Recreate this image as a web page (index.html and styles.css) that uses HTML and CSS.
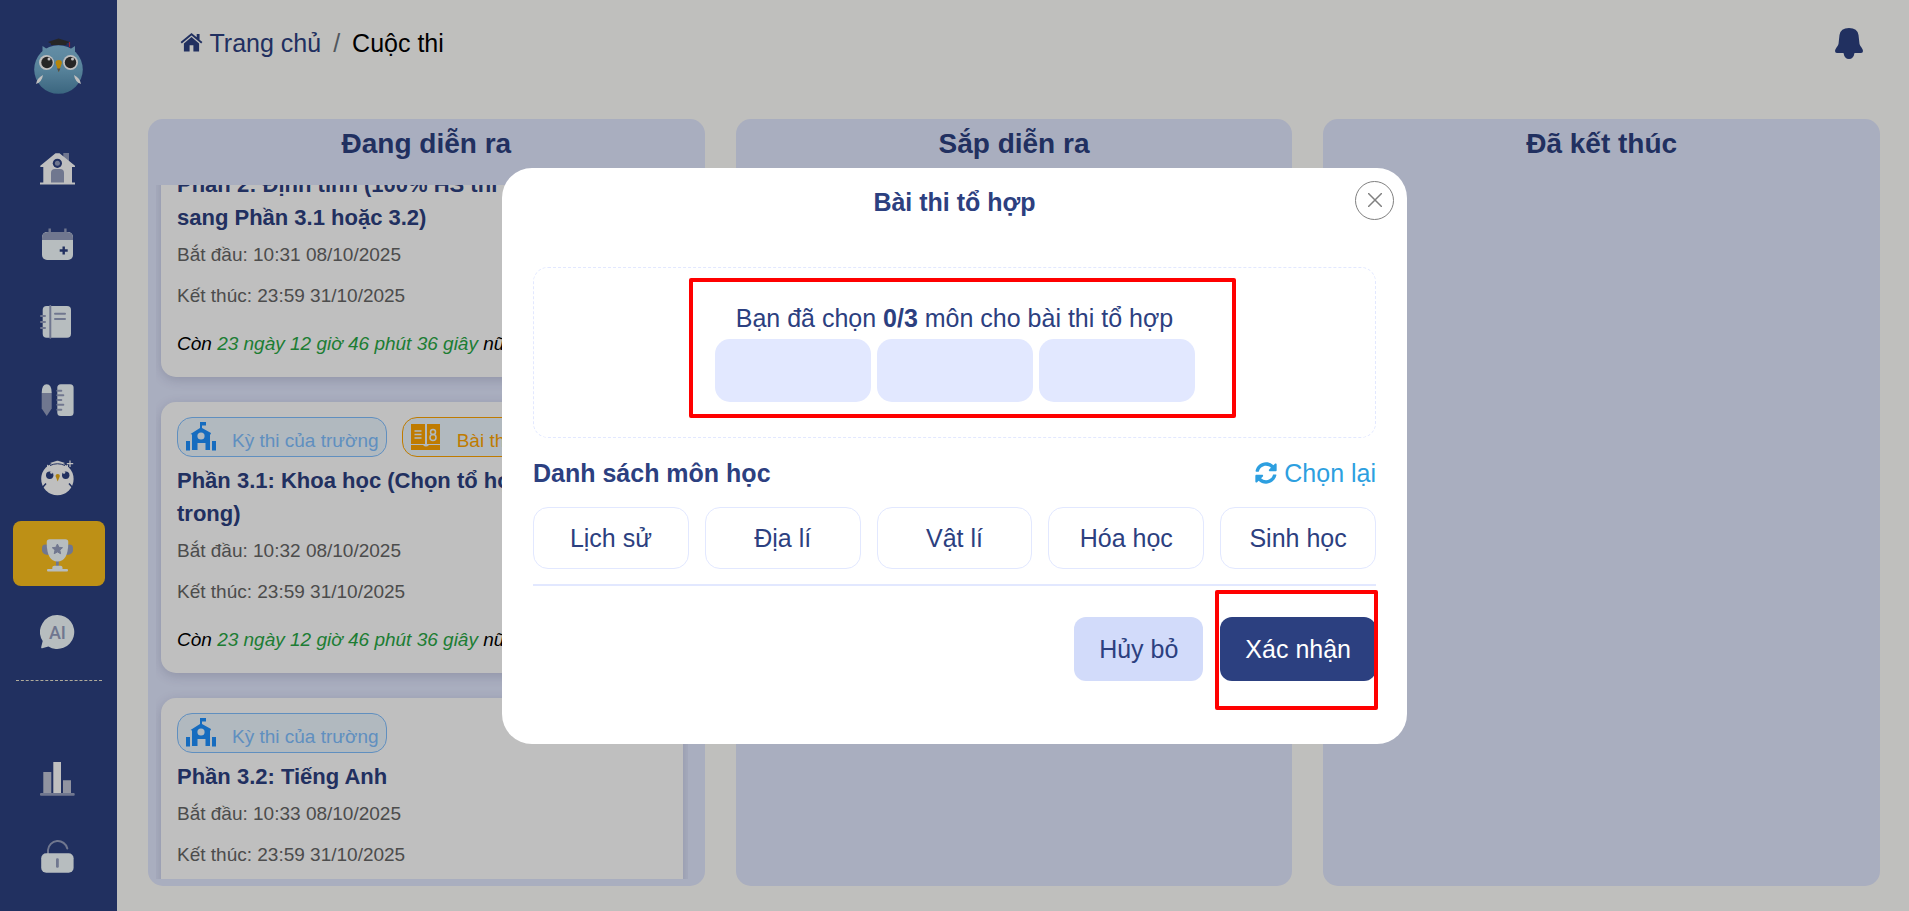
FILE: index.html
```html
<!DOCTYPE html>
<html lang="vi">
<head>
  <meta charset="UTF-8">
  <meta name="viewport" content="width=device-width, initial-scale=1.0">
  <title>Cuộc thi</title>
  <link rel="stylesheet" href="styles.css">
</head>
<body>
  <!-- shared icons -->
  <svg class="sprite" aria-hidden="true">
    <symbol id="icon-school" viewBox="0 0 30 30">
      <path fill="currentColor" d="M14 0h6v3.500h-4V6l9 5-.5 1.500H24V28h-4.500v-7h-8v7H6V12.500l-1.500-.5L14 6zM0 19h4v9.500H0zM26 19h4v9.500h-4z"/>
      <circle cx="15" cy="14" r="3.600" fill="#edf7ff"/>
    </symbol>
    <symbol id="icon-book" viewBox="0 0 30 28">
      <path fill="currentColor" d="M0 1h14v20H0zM16 1h13v20H16zM0 22h12q3 3 6 0h11v5H0z"/>
      <path stroke="#edf7ff" stroke-width="1.500" fill="none" d="M3.500 8h7M3.500 11.500h7M3.500 15h7"/>
      <circle cx="22" cy="9" r="2.500" stroke="#edf7ff" stroke-width="1.500" fill="none"/>
      <circle cx="22" cy="14.500" r="3" stroke="#edf7ff" stroke-width="1.500" fill="none"/>
    </symbol>
  </svg>

  <div class="layout">
    <aside class="sidebar">
      <a href="#" class="logo" aria-label="Logo">
        <svg width="50" height="56" viewBox="0 0 50 56">
          <defs>
            <linearGradient id="owlBody" x1="0" y1="0" x2="0" y2="1">
              <stop offset="0" stop-color="#86bede"/>
              <stop offset="0.500" stop-color="#74aece"/>
              <stop offset="1" stop-color="#4f88aa"/>
            </linearGradient>
          </defs>
          <path d="M8.500 8l6 4-6 6zM41 8l-6 4 6 6z" fill="#82b8d8"/>
          <circle cx="24.500" cy="31.500" r="24.300" fill="url(#owlBody)"/>
          <path d="M14 4l10.500-3.500L36 4l-3.500 1.500V7H17V5.500z" fill="#333"/>
          <path d="M35.500 4v5" stroke="#c0304a" stroke-width="1.200"/>
          <circle cx="12.500" cy="24.500" r="7.500" fill="#fff"/>
          <circle cx="36.500" cy="24.500" r="7.500" fill="#fff"/>
          <circle cx="13" cy="24.500" r="5.700" fill="#333"/>
          <circle cx="36.500" cy="24.500" r="5.700" fill="#333"/>
          <circle cx="15" cy="21" r="1.500" fill="#fff"/>
          <circle cx="38.500" cy="21" r="1.500" fill="#fff"/>
          <path d="M24.700 34l-3.200-9q0-3 3.200-3t3.200 3z" fill="#f2b00c"/>
          <path d="M23 30.500h3.400L24.700 34z" fill="#666"/>
          <path d="M9 37q-1 7-7 9 1-6 7-9zM40 37q1 7 7 9-1-6-7-9z" fill="#fff"/>
        </svg>
      </a>

      <nav class="menu">
        <a href="#" class="menu-item" aria-label="Trang chủ">
          <svg viewBox="0 0 38 38">
            <rect x="23.300" y="3" width="5.700" height="10" class="dim"/>
            <path d="M15.500 3.300h4L35 15.700V17h-3v15.500h3v2H0v-2h3.300V17H.3v-1.300z" class="lit-w"/>
            <circle cx="17.400" cy="13.300" r="4.600" fill="#2c4080"/>
            <circle cx="17.400" cy="13.300" r="2.500" class="dim"/>
            <path d="M11 32.600V23q0-4 4-4h5q4 0 4 4v9.600z" class="dim"/>
          </svg>
        </a>
        <a href="#" class="menu-item" aria-label="Lịch">
          <svg viewBox="0 0 38 38">
            <rect x="2" y="5" width="31" height="28" rx="5" class="lit"/>
            <path d="M2 13v-2q0-6 6-6h19q6 0 6 6v2zM8.500 1.500h2.400V6H8.500zM24.200 1.500h2.400V6h-2.400z" class="dim"/>
            <path d="M23.700 19.500v8M19.700 23.500h8" stroke="#2c4080" stroke-width="2.400"/>
          </svg>
        </a>
        <a href="#" class="menu-item" aria-label="Sổ tay">
          <svg viewBox="0 0 38 38">
            <rect x="2.700" y="2" width="28.300" height="31.700" rx="4" class="lit"/>
            <path d="M10.300 2v31.700M15 9.700h10M15 15h10" class="dim-line"/>
            <path d="M1 12h4M1 18h4M1 24h4" class="dim-line"/>
          </svg>
        </a>
        <a href="#" class="menu-item" aria-label="Học liệu">
          <svg viewBox="0 0 38 38">
            <path d="M1.700 12q0-8.700 5-8.700t5 8.700z" class="lit"/>
            <path d="M1.700 12h10v15.500l-5 7.500-5-7.500z" class="dim"/>
            <rect x="17.300" y="3.300" width="16.300" height="31.700" rx="3.500" class="lit"/>
            <path d="M17.300 9.700h4M17.300 14.300h6M17.300 19h4M17.300 23.700h6M17.300 28.700h4" class="dim-line"/>
          </svg>
        </a>
        <a href="#" class="menu-item" aria-label="Trợ lý">
          <svg viewBox="0 0 38 38">
            <path d="M7 6.500l5 4-5 5zM28 6.500l-5 4 5 5z" class="lit-w"/>
            <circle cx="17.400" cy="21" r="16.200" class="lit-w"/>
            <path d="M10 5l7-2.300h1L25 5l-3 1.500-4.500-1-4.500 1z" class="lit-w"/>
            <path d="M10 7.500q7.500-3.500 15 0" stroke="#2c4080" stroke-width="1" fill="none"/>
            <path d="M30 2.500v6.500M26.800 5.700h6.400" stroke="#fff" stroke-width="1.200"/>
            <circle cx="9.700" cy="17.300" r="3.700" fill="#2c4080"/>
            <circle cx="25.700" cy="17.300" r="3.700" fill="#2c4080"/>
            <circle cx="11.500" cy="14.500" r="1.300" fill="#fff"/>
            <circle cx="24" cy="14.500" r="1.300" fill="#fff"/>
            <path d="M17.700 23.500l-2.200-5.500q0-2 2.200-2t2.200 2z" fill="#e8ad16"/>
            <path d="M6 25.500l-3.500 4M29 25.500l3.500 4" stroke="#2c4080" stroke-width="1.500"/>
          </svg>
        </a>
        <a href="#" class="menu-item active" aria-label="Cuộc thi">
          <svg viewBox="0 0 38 38">
            <path d="M7 9.700Q2 9 2 13v3q1 4 7 4zM28 9.700q5-.7 5 3.300v3q-1 4-7 4z" class="dim"/>
            <path d="M16 25h2.800v6H16z" class="dim"/>
            <path d="M6.700 7q0-2.700 3-2.700h15.600q3 0 3 2.700 0 19.500-10.800 19.500T6.700 7z" class="lit"/>
            <path d="M17.400 9l1.500 3.300 3.600.4-2.700 2.400.8 3.600-3.200-1.800-3.200 1.800.8-3.600-2.700-2.400 3.600-.4z" class="dim" stroke="#969fbf"/>
            <path d="M12.300 34v-1.500q0-1.800 2-1.800h6.200q2 0 2 1.800V34h4.500q1 0 1 1.200t-1 1.200H8q-1 0-1-1.200T8 34z" class="lit"/>
          </svg>
        </a>
        <a href="#" class="menu-item" aria-label="Trợ lý AI">
          <svg viewBox="0 0 38 38">
            <path d="M17.400 3a17 17 0 1 1-9 31.500l-6.200 1.800q-1.200 0-1-1.200l1.500-6A17 17 0 0 1 17.400 3z" class="lit"/>
            <text x="17.400" y="26.500" class="ai-text">AI</text>
          </svg>
        </a>
      </nav>

      <nav class="menu menu-bottom">
        <a href="#" class="menu-item" aria-label="Thống kê">
          <svg viewBox="0 0 38 38">
            <path d="M3.300 12h8v21h-8zM23 20.300h8V33h-8z" class="mid"/>
            <path d="M13.300 2h7.700v31h-7.700z" class="lit-w"/>
            <rect x="0" y="33" width="34.700" height="2.700" rx="1" class="dim"/>
          </svg>
        </a>
        <a href="#" class="menu-item" aria-label="Đổi mật khẩu">
          <svg viewBox="0 0 38 38">
            <path d="M8 17v-4A9.800 9.800 0 0 1 27.300 11.500" class="dim-line"/>
            <rect x="1.200" y="16.300" width="32.400" height="19.400" rx="5" class="lit"/>
            <rect x="16" y="21.300" width="2.800" height="9.400" rx="1.200" class="dim"/>
          </svg>
        </a>
      </nav>
    </aside>

    <main class="main">
      <header class="header">
        <div class="breadcrumb">
          <a href="#">
            <svg width="23" height="19" viewBox="0 0 23 20">
              <path fill="currentColor" d="M11.500 0L0 9.500 1.300 11 11.500 2.700 21.700 11 23 9.500 20 7V1h-3v3.600zM11.500 4.300L3.500 11v8.500h6V13h4v6.500h6V11z"/>
            </svg>
            Trang chủ</a>
          <span class="slash">/</span>
          <span>Cuộc thi</span>
        </div>
        <button class="bell" aria-label="Thông báo">
          <svg width="28" height="31" viewBox="0 0 28 31">
            <path fill="currentColor" d="M14 0q8.500 0 9.500 7l1 9q.5 1.500 2 3.500 1.500 2 1.500 3.500 0 2-2 2h-6.500q-1 6-5.500 6t-5.500-6H2q-2 0-2-2 0-1.500 1.500-3.500t2-3.500l1-9Q5.500 0 14 0z"/>
          </svg>
        </button>
      </header>

      <div class="board">
        <section class="column">
          <h2>Đang diễn ra</h2>
          <div class="list" id="list">
            <article class="card">
              <div class="tags">
                <span class="tag"><svg width="30" height="30"><use href="#icon-school"/></svg>Kỳ thi của trường</span>
              </div>
              <h3>Phần 2: Định tính (100% HS thi xong chuyển sang Phần 3.1 hoặc 3.2)</h3>
              <p>Bắt đầu: 10:31 08/10/2025</p>
              <p>Kết thúc: 23:59 31/10/2025</p>
              <p class="countdown">Còn <span>23 ngày 12 giờ 46 phút 36 giây</span> nữa</p>
            </article>
            <article class="card">
              <div class="tags">
                <span class="tag"><svg width="30" height="30"><use href="#icon-school"/></svg>Kỳ thi của trường</span>
                <span class="tag orange"><svg width="30" height="30"><use href="#icon-book"/></svg>Bài thi tổ hợp</span>
              </div>
              <h3>Phần 3.1: Khoa học (Chọn tổ hợp 3 môn bên trong)</h3>
              <p>Bắt đầu: 10:32 08/10/2025</p>
              <p>Kết thúc: 23:59 31/10/2025</p>
              <p class="countdown">Còn <span>23 ngày 12 giờ 46 phút 36 giây</span> nữa</p>
            </article>
            <article class="card">
              <div class="tags">
                <span class="tag"><svg width="30" height="30"><use href="#icon-school"/></svg>Kỳ thi của trường</span>
              </div>
              <h3>Phần 3.2: Tiếng Anh</h3>
              <p>Bắt đầu: 10:33 08/10/2025</p>
              <p>Kết thúc: 23:59 31/10/2025</p>
              <p class="countdown">Còn <span>23 ngày 12 giờ 46 phút 36 giây</span> nữa</p>
            </article>
          </div>
        </section>
        <section class="column">
          <h2>Sắp diễn ra</h2>
        </section>
        <section class="column">
          <h2>Đã kết thúc</h2>
        </section>
      </div>
    </main>
  </div>

  <div class="overlay">
    <div class="modal" role="dialog" aria-labelledby="modalTitle">
      <button class="close" aria-label="Đóng">
        <svg width="14" height="14" viewBox="0 0 14 14"><path d="M0 0l14 14M14 0L0 14" stroke="currentColor" stroke-width="1.500"/></svg>
      </button>
      <h2 id="modalTitle">Bài thi tổ hợp</h2>

      <div class="chosen">
        <p>Bạn đã chọn <b>0/3</b> môn cho bài thi tổ hợp</p>
        <div class="slots">
          <div class="slot"></div>
          <div class="slot"></div>
          <div class="slot"></div>
        </div>
        <div class="mark mark-chosen"></div>
      </div>

      <div class="subjects-head">
        <h3>Danh sách môn học</h3>
        <button class="reset">
          <svg width="22" height="22" viewBox="0 0 512 512">
            <path fill="currentColor" d="M370.700 133.300C339.500 104 298.900 88 255.800 88c-77.500.1-144.300 53.200-162.800 126.900-1.300 5.400-6.100 9.100-11.700 9.100H24.100c-7.500 0-13.200-6.800-11.800-14.200C33.900 94.900 134.800 8 256 8c66.400 0 126.800 26.100 171.300 68.700L463 41c15.100-15.100 41-4.400 41 17v134c0 13.300-10.700 24-24 24H346c-21.400 0-32.100-25.900-17-41zM32 296h134c21.400 0 32.100 25.900 17 41l-41.800 41.800c31.300 29.300 71.800 45.300 114.900 45.300 77.400-.1 144.300-53.100 162.800-126.800 1.300-5.400 6.100-9.100 11.700-9.100h57.300c7.500 0 13.200 6.800 11.800 14.200C478.100 417.100 377.200 504 256 504c-66.400 0-126.800-26.100-171.300-68.700L49 471c-15.100 15.100-41 4.400-41-17V320c0-13.300 10.700-24 24-24z"/>
          </svg>
          Chọn lại</button>
      </div>
      <div class="subjects">
        <button>Lịch sử</button>
        <button>Địa lí</button>
        <button>Vật lí</button>
        <button>Hóa học</button>
        <button>Sinh học</button>
      </div>

      <div class="actions">
        <button class="cancel">Hủy bỏ</button>
        <button class="confirm">Xác nhận</button>
        <div class="mark mark-confirm"></div>
      </div>
    </div>
  </div>

  <script>
    document.getElementById('list').scrollTop = 84;
  </script>
</body>
</html>
```

FILE: styles.css
```css
* {
  box-sizing: border-box;
}

html, body {
  height: 100%;
  margin: 0;
}

body {
  font-family: "Liberation Sans", Arial, sans-serif;
  font-size: 25px;
  line-height: 30px;
  color: #2c4080;
  background-color: #fffffc;
}

h2, h3, p {
  margin: 0;
}

a {
  color: inherit;
  text-decoration: none;
}

button {
  font: inherit;
  color: inherit;
  background: none;
  border: none;
  padding: 0;
  cursor: pointer;
}

.sprite {
  display: none;
}

.layout {
  display: flex;
  height: 100vh;
  overflow: hidden;
}

/* sidebar */
.sidebar {
  flex: none;
  width: 117px;
  padding: 38px 12px 0 13px;
  background-color: #2c4080;
}

.logo {
  display: flex;
  justify-content: center;
  height: 98px;
}

.menu {
  display: flex;
  flex-direction: column;
  gap: 12px;
}

.menu-item {
  display: flex;
  align-items: center;
  justify-content: center;
  height: 65px;
  border-radius: 8px;
}

.menu-item.active {
  background-color: #fdc01e;
}

.menu-item svg {
  width: 38px;
  height: 38px;
}

.menu-bottom {
  margin: 17px 3px 0;
  padding-top: 65px;
  border-top: 1px dashed #ebe4cf;
}

.lit { fill: #f4fcff; }
.lit-w { fill: #fff; }
.mid { fill: #c0c5d6; }
.dim { fill: #969fbf; }

.dim-line {
  fill: none;
  stroke: #969fbf;
  stroke-width: 2;
  stroke-linecap: round;
}

.ai-text {
  font-size: 18px;
  font-family: Roboto, sans-serif;
  font-weight: 500;
  text-anchor: middle;
  fill: #969fbf;
}

/* main */
.main {
  flex: 1;
  min-width: 0;
  display: flex;
  flex-direction: column;
}

.header {
  display: flex;
  align-items: center;
  justify-content: space-between;
  height: 86px;
  padding: 0 46px 0 63px;
}

.breadcrumb {
  display: flex;
  gap: 12px;
  color: #000;
}

.breadcrumb a {
  color: #2c4080;
}

.slash {
  color: #6c757d;
}

.bell {
  display: flex;
}

.board {
  flex: 1;
  min-height: 0;
  display: grid;
  grid-template-columns: repeat(3, 1fr);
  gap: 31px;
  padding: 33px 29px 25px 31px;
}

.column {
  display: flex;
  flex-direction: column;
  min-height: 0;
  padding-bottom: 7px;
  border-radius: 15px;
  background-color: #e2e8ff;
}

.column h2 {
  height: 66px;
  font-size: 28px;
  line-height: 49px;
  text-align: center;
}

.list {
  flex: 1;
  min-height: 0;
  display: flex;
  flex-direction: column;
  gap: 25px;
  margin: 0 17px 0 8px;
  padding: 5px;
  overflow-y: auto;
  scrollbar-width: none;
}

.card {
  flex: none;
  padding: 15px 16px 13px;
  border-radius: 15px;
  background-color: #fff;
  box-shadow: 0 3px 12px rgba(44, 44, 80, 0.18);
}

.tags {
  display: flex;
  gap: 15px;
  margin-bottom: 7px;
}

.tag {
  display: flex;
  align-items: center;
  gap: 16px;
  height: 40px;
  padding: 7px 7px 0 8px;
  font-size: 19px;
  line-height: 30px;
  color: #80bfff;
  background-color: #edf7ff;
  border: 1px solid #80bfff;
  border-radius: 15px;
}

.tag svg {
  color: #1e90ff;
  margin-top: -7px;
}

.tag.orange {
  color: #ffa500;
  border-color: #ffa500;
}

.tag.orange svg {
  color: #ffa500;
}

.card h3 {
  font-size: 22px;
  line-height: 33px;
}

.card p {
  font-size: 19px;
  line-height: 41px;
  color: #666;
}

.card .countdown {
  margin-top: 7px;
  font-style: italic;
  color: #000;
}

.card .countdown span {
  color: #28a745;
}

/* modal */
.overlay {
  position: fixed;
  inset: 0;
  display: flex;
  align-items: center;
  justify-content: center;
  background-color: rgba(0, 0, 0, 0.25);
}

.modal {
  position: relative;
  width: 905px;
  max-width: 95%;
  padding: 19px 31px 63px;
  border-radius: 30px;
  background-color: #fff;
}

.modal h2 {
  margin-bottom: 50px;
  font-size: 25px;
  text-align: center;
}

.close {
  position: absolute;
  top: 13px;
  right: 13px;
  display: flex;
  align-items: center;
  justify-content: center;
  width: 39px;
  height: 39px;
  color: #808080;
  border: 1px solid #808080;
  border-radius: 50%;
}

.chosen {
  position: relative;
  padding: 35px 0;
  text-align: center;
  border: 1px dashed #e2e8ff;
  border-radius: 15px;
}

.slots {
  display: flex;
  justify-content: center;
  gap: 6px;
  margin-top: 6px;
}

.slot {
  width: 156px;
  height: 63px;
  border-radius: 15px;
  background-color: #e2e8ff;
}

.subjects-head {
  display: flex;
  justify-content: space-between;
  margin: 20px 0 19px;
}

.subjects-head h3 {
  font-size: 25px;
}

.reset {
  display: flex;
  align-items: center;
  gap: 7px;
  color: #2d9fe0;
}

.subjects {
  display: grid;
  grid-template-columns: repeat(5, 1fr);
  gap: 16px;
  padding-bottom: 15px;
  border-bottom: 2px solid #e2e8ff;
}

.subjects button {
  height: 62px;
  border: 1px solid #e2e8ff;
  border-radius: 15px;
}

.actions {
  position: relative;
  display: flex;
  justify-content: flex-end;
  gap: 17px;
  margin-top: 31px;
}

.cancel, .confirm {
  height: 64px;
  padding: 0 25px;
  border-radius: 12px;
  background-color: #d2dbfa;
}

.confirm {
  color: #fff;
  background-color: #2c4080;
}

/* red highlight frames */
.mark {
  position: absolute;
  border: 4px solid #f00;
  border-radius: 2px;
  pointer-events: none;
}

.mark-chosen {
  top: 10px;
  left: 155px;
  right: 139px;
  bottom: 19px;
}

.mark-confirm {
  top: -27px;
  right: -2px;
  bottom: -29px;
  width: 163px;
}
```
